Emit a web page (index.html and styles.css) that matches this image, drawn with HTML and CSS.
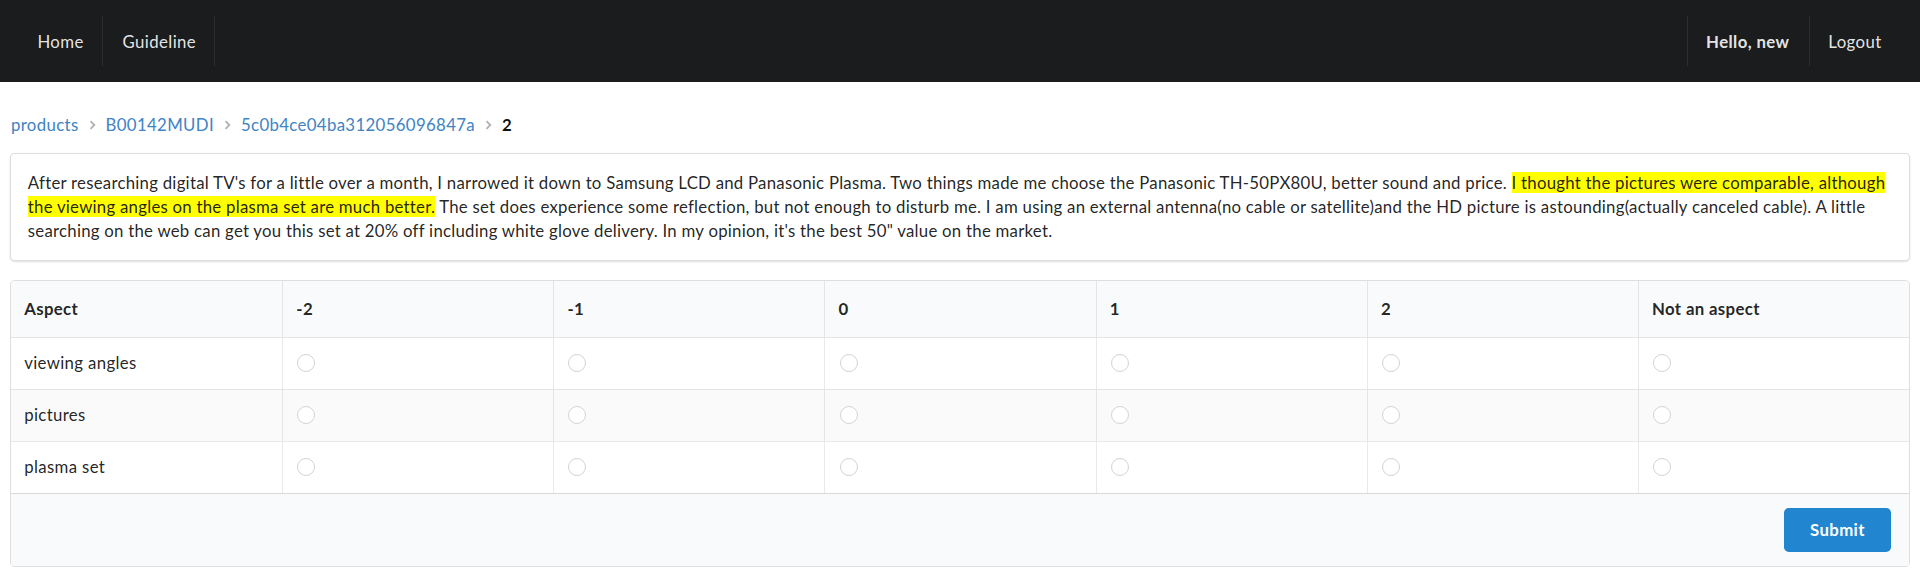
FILE: index.html
```html
<!DOCTYPE html>
<html lang="en">
<head>
<meta charset="utf-8">
<title>Annotate</title>
<link rel="stylesheet" href="styles.css">
</head>
<body>
<nav class="topbar">
  <div class="menu-left">
    <a class="menu-item sep-right" href="#">Home</a>
    <a class="menu-item sep-right" href="#">Guideline</a>
  </div>
  <div class="menu-right">
    <span class="menu-item sep-left bold">Hello, new</span>
    <a class="menu-item sep-left" href="#">Logout</a>
  </div>
</nav>

<main class="page">
  <div class="breadcrumb">
    <a class="crumb" href="#">products</a>
    <svg class="divider" width="7" height="10" viewBox="0 0 7 10"><path d="M1.5 1.2 L5.3 5 L1.5 8.8" fill="none" stroke="#b3b3b3" stroke-width="1.9"/></svg>
    <a class="crumb" href="#">B00142MUDI</a>
    <svg class="divider" width="7" height="10" viewBox="0 0 7 10"><path d="M1.5 1.2 L5.3 5 L1.5 8.8" fill="none" stroke="#b3b3b3" stroke-width="1.9"/></svg>
    <a class="crumb" href="#">5c0b4ce04ba312056096847a</a>
    <svg class="divider" width="7" height="10" viewBox="0 0 7 10"><path d="M1.5 1.2 L5.3 5 L1.5 8.8" fill="none" stroke="#b3b3b3" stroke-width="1.9"/></svg>
    <span class="crumb active">2</span>
  </div>

  <section class="segment">
    <p>After researching digital TV's for a little over a month, I narrowed it down to Samsung LCD and Panasonic Plasma. Two things made me choose the Panasonic TH-50PX80U, better sound and price. <mark>I thought the pictures were comparable, although the viewing angles on the plasma set are much better.</mark> The set does experience some reflection, but not enough to disturb me. I am using an external antenna(no cable or satellite)and the HD picture is astounding(actually canceled cable). A little searching on the web can get you this set at 20% off including white glove delivery. In my opinion, it's the best 50" value on the market.</p>
  </section>

  <table class="grid">
    <thead>
      <tr><th>Aspect</th><th>-2</th><th>-1</th><th>0</th><th>1</th><th>2</th><th>Not an aspect</th></tr>
    </thead>
    <tbody>
      <tr>
        <td>viewing angles</td>
        <td><input type="radio" name="a1"></td><td><input type="radio" name="a1"></td><td><input type="radio" name="a1"></td><td><input type="radio" name="a1"></td><td><input type="radio" name="a1"></td><td><input type="radio" name="a1"></td>
      </tr>
      <tr class="striped">
        <td>pictures</td>
        <td><input type="radio" name="a2"></td><td><input type="radio" name="a2"></td><td><input type="radio" name="a2"></td><td><input type="radio" name="a2"></td><td><input type="radio" name="a2"></td><td><input type="radio" name="a2"></td>
      </tr>
      <tr>
        <td>plasma set</td>
        <td><input type="radio" name="a3"></td><td><input type="radio" name="a3"></td><td><input type="radio" name="a3"></td><td><input type="radio" name="a3"></td><td><input type="radio" name="a3"></td><td><input type="radio" name="a3"></td>
      </tr>
    </tbody>
    <tfoot>
      <tr><th colspan="7"><div class="foot-row"><button class="submit" type="button">Submit</button></div></th></tr>
    </tfoot>
  </table>
</main>
</body>
</html>
```

FILE: styles.css
```css
* { box-sizing: border-box; }

html, body {
  margin: 0;
  padding: 0;
  background: #ffffff;
  font-family: Lato, "Noto Sans", "Liberation Sans", sans-serif;
  font-size: 16.8px;
  letter-spacing: 0.35px;
  line-height: 1.4285em;
  color: rgba(0, 0, 0, 0.87);
}

a { text-decoration: none; }

/* top bar */
.topbar {
  display: flex;
  justify-content: space-between;
  align-items: center;
  height: 82px;
  padding: 0 19px 0 18px;
  background: #1b1c1d;
}

.menu-left, .menu-right {
  display: flex;
  align-items: center;
}

.menu-item {
  position: relative;
  display: block;
  padding: 15.6px 19.4px;
  line-height: 19px;
  color: rgba(255, 255, 255, 0.9);
  font-size: 16.8px;
  letter-spacing: 0.4px;
}

.menu-item.bold { font-weight: 700; }

.sep-right::before,
.sep-left::before {
  content: "";
  position: absolute;
  top: 0;
  width: 1px;
  height: 100%;
  background: rgba(255, 255, 255, 0.08);
}
.sep-right::before { right: 0; }
.sep-left::before { left: 0; }

/* page */
.page {
  padding: 31px 10px 0;
}

.breadcrumb {
  display: flex;
  align-items: center;
  gap: 10px;
  line-height: 24px;
  padding-left: 1px;
}

.crumb { color: #4183c4; }
.crumb.active { color: rgba(0, 0, 0, 0.95); font-weight: 700; }
.divider { display: block; }

.segment {
  margin-top: 16px;
  padding: 16.8px;
  border: 1px solid rgba(34, 36, 38, 0.15);
  border-radius: 4.8px;
  box-shadow: 0 1px 2px 0 rgba(34, 36, 38, 0.15);
  background: #ffffff;
}

.segment p {
  margin: 0;
  line-height: 24px;
  letter-spacing: 0.25px;
}

mark {
  background: #ffff00;
  color: rgba(0, 0, 0, 0.87);
}

/* table */
.grid {
  width: 100%;
  margin-top: 19px;
  table-layout: fixed;
  border-collapse: separate;
  border-spacing: 0;
  border: 1px solid rgba(34, 36, 38, 0.15);
  border-radius: 4.8px;
  overflow: hidden;
}

.grid thead th {
  background: #f9fafb;
  text-align: left;
  font-weight: 700;
  padding: 16.2px 13.2px;
  line-height: 24px;
  border-bottom: 1px solid rgba(34, 36, 38, 0.1);
}

.grid thead th + th,
.grid tbody td + td {
  border-left: 1px solid rgba(34, 36, 38, 0.1);
}

.grid tbody td {
  padding: 13.5px 13.2px;
  line-height: 24px;
  vertical-align: middle;
}

.grid tbody tr + tr td {
  border-top: 1px solid rgba(34, 36, 38, 0.1);
}

.grid tbody tr.striped td {
  background: rgba(0, 0, 50, 0.02);
}

.grid input[type="radio"] {
  -webkit-appearance: none;
  appearance: none;
  display: block;
  width: 18px;
  height: 18px;
  margin: 0 0 0 1px;
  border: 1px solid #d4d4d5;
  border-radius: 50%;
  background: #ffffff;
}

.grid tfoot th {
  background: #f9fafb;
  padding: 14px 13.2px;
  border-top: 1px solid rgba(34, 36, 38, 0.15);
}

.foot-row {
  display: flex;
  justify-content: flex-end;
}

.submit {
  margin-right: 5px;
  padding: 13.6px 26px;
  border: none;
  border-radius: 4.8px;
  background: #2185d0;
  color: #ffffff;
  font-family: Lato, "Noto Sans", "Liberation Sans", sans-serif;
  font-size: 16.8px;
  font-weight: 700;
  letter-spacing: 0.35px;
  line-height: 16.8px;
}
```
